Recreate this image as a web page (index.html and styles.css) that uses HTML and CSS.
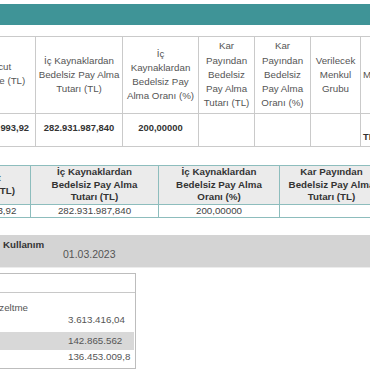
FILE: index.html
```html
<!DOCTYPE html>
<html lang="tr">
<head>
<meta charset="utf-8">
<title>Bedelsiz Sermaye Artırımı</title>
<link rel="stylesheet" href="styles.css">
</head>
<body>
<div class="page">
  <div class="topbar"></div>

  <div class="t1">
    <div class="h first">Mevcut<br>Sermaye (TL)</div>
    <div class="h">İç Kaynaklardan<br>Bedelsiz Pay Alma<br>Tutarı (TL)</div>
    <div class="h">İç<br>Kaynaklardan<br>Bedelsiz Pay<br>Alma Oranı (%)</div>
    <div class="h">Kar<br>Payından<br>Bedelsiz<br>Pay Alma<br>Tutarı (TL)</div>
    <div class="h">Kar<br>Payından<br>Bedelsiz<br>Pay Alma<br>Oranı (%)</div>
    <div class="h">Verilecek<br>Menkul<br>Grubu</div>
    <div class="h left">Menkul Kıymet ISIN Kodu</div>

    <div class="d first">141.465.993,92</div>
    <div class="d">282.931.987,840</div>
    <div class="d">200,00000</div>
    <div class="d"></div>
    <div class="d"></div>
    <div class="d"></div>
    <div class="d last">TRE</div>
  </div>

  <div class="t2">
    <div class="h first">Mevcut<br>Sermaye (TL)</div>
    <div class="h">İç Kaynaklardan<br>Bedelsiz Pay Alma<br>Tutarı (TL)</div>
    <div class="h">İç Kaynaklardan<br>Bedelsiz Pay Alma<br>Oranı (%)</div>
    <div class="h">Kar Payından<br>Bedelsiz Pay Alma<br>Tutarı (TL)</div>

    <div class="d first">141.465.993,92</div>
    <div class="d">282.931.987,840</div>
    <div class="d">200,00000</div>
    <div class="d"></div>
  </div>

  <div class="band">
    <div class="lbl">Kullanım</div>
    <div class="val">01.03.2023</div>
  </div>

  <div class="box">
    <div class="box-head"></div>
    <div class="row row-a">
      <div class="lbl">Enflasyon Düzeltme</div>
      <div class="val">3.613.416,04</div>
    </div>
    <div class="row row-b">
      <div class="lbl"></div>
      <div class="val">142.865.562</div>
    </div>
    <div class="row row-c">
      <div class="lbl"></div>
      <div class="val">136.453.009,8</div>
    </div>
  </div>
</div>
</body>
</html>
```

FILE: styles.css
```css
* { box-sizing: border-box; }

html, body {
  margin: 0;
  padding: 0;
  overflow: hidden;
  background: #ffffff;
}

body {
  width: 370px;
  height: 375px;
  font-family: "Liberation Sans", Arial, sans-serif;
}

.page {
  width: 370px;
  height: 375px;
  overflow: hidden;
}

.topbar {
  margin-top: 4px;
  height: 21px;
  background: #3f9497;
}

/* first table */
.t1 {
  margin-top: 11px;
  margin-left: -39px;
  display: grid;
  grid-template-columns: 73px 86px 75px 55px 55px 49px 90px;
  grid-template-rows: 76px 32px;
  gap: 1px;
  background: #cacaca;
  border: 1px solid #cacaca;
  width: max-content;
}

.t1 > div { background: #ffffff; }

.t1 .h {
  display: flex;
  align-items: center;
  justify-content: center;
  text-align: center;
  font-size: 9.75px;
  line-height: 14.25px;
  color: #555555;
  white-space: nowrap;
}

.t1 .h.first { padding-right: 6px; padding-bottom: 2px; }

.t1 .h.left {
  justify-content: flex-start;
  text-align: left;
  padding-left: 2px;
}

.t1 .d {
  display: flex;
  align-items: center;
  justify-content: center;
  font-size: 9.4px;
  line-height: 11px;
  font-weight: bold;
  color: #333333;
  padding-bottom: 5px;
  white-space: nowrap;
}

.t1 .d.first { padding-right: 4px; }

.t1 .d.last {
  align-items: flex-end;
  justify-content: flex-start;
  padding: 0 0 4px 2px;
}

/* second table */
.t2 {
  margin-top: 18px;
  margin-left: -58px;
  display: grid;
  grid-template-columns: 87px 127px 120px 103px;
  grid-template-rows: 38px 12px;
  gap: 1px;
  background: #8dbdbd;
  border: 1px solid #8dbdbd;
  width: max-content;
}

.t2 .h {
  display: flex;
  align-items: center;
  justify-content: center;
  text-align: center;
  background: #ebebeb;
  font-weight: bold;
  font-size: 9.75px;
  line-height: 12.6px;
  color: #333333;
  white-space: nowrap;
}

.t2 .h.first { padding-right: 5px; }

.t2 .d {
  background: #ffffff;
  text-align: center;
  font-size: 9.75px;
  line-height: 11px;
  color: #444444;
  white-space: nowrap;
}

.t2 .d.first { padding-right: 8px; }

/* gray band */
.band {
  margin-top: 17px;
  height: 33px;
  background: #d4d4d4;
  border-bottom: 1px solid #ececec;
  display: flex;
}

.band .lbl {
  width: 63px;
  padding: 4px 0 0 3px;
  font-weight: bold;
  font-size: 9.75px;
  line-height: 12px;
  color: #333333;
}

.band .val {
  padding-top: 13px;
  font-size: 10.5px;
  line-height: 12px;
  color: #555555;
}

/* box */
.box {
  margin-top: 5px;
  margin-left: -65px;
  width: 201px;
  border: 1px solid #bdbdbd;
  padding: 0 1px 1px 1px;
}

.box-head {
  height: 19px;
  margin: 0 -1px;
  border-bottom: 1px solid #c8c8c8;
}

.row {
  display: grid;
  grid-template-columns: 129px 68px;
  font-size: 9.75px;
  line-height: 12px;
  color: #555555;
}

.row .lbl {
  text-align: right;
  padding-right: 38px;
  white-space: nowrap;
}

.row .val {
  padding-left: 2px;
  white-space: nowrap;
}

.row-a { height: 39px; }
.row-a .lbl { padding-top: 9px; }
.row-a .val { padding-top: 21px; }

.row-b {
  height: 18px;
  background: #d8d8d8;
}
.row-b .val { padding-top: 3px; }

.row-c { height: 17px; }
.row-c .val { padding-top: 1px; }
```
